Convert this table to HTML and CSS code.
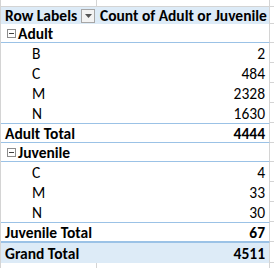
FILE: index.html
```html
<!DOCTYPE html>
<html>
<head>
<meta charset="utf-8">
<link rel="stylesheet" href="styles.css">
</head>
<body>
<div class="sheet">
  <div class="row strip">
    <div class="edge"></div><div class="cell a"></div><div class="cell b"></div><div class="cell c"></div>
  </div>
  <div class="row hdr">
    <div class="edge"></div>
    <div class="cell a bold">Row Labels <span class="dd"><svg width="7" height="4" viewBox="0 0 7 4"><path d="M0 0H7L3.5 4Z" fill="#555"/></svg></span></div>
    <div class="cell b bold">Count of Adult or Juvenile</div>
    <div class="cell c"></div>
  </div>
  <div class="row cat">
    <div class="edge"></div>
    <div class="cell a bold"><span class="box"></span>Adult</div>
    <div class="cell b num"></div>
    <div class="cell c"></div>
  </div>
  <div class="row item"><div class="edge"></div><div class="cell a"><span class="ind">B</span></div><div class="cell b num">2</div><div class="cell c"></div></div>
  <div class="row item"><div class="edge"></div><div class="cell a"><span class="ind">C</span></div><div class="cell b num">484</div><div class="cell c"></div></div>
  <div class="row item"><div class="edge"></div><div class="cell a"><span class="ind">M</span></div><div class="cell b num">2328</div><div class="cell c"></div></div>
  <div class="row item"><div class="edge"></div><div class="cell a"><span class="ind">N</span></div><div class="cell b num">1630</div><div class="cell c"></div></div>
  <div class="row sub"><div class="edge"></div><div class="cell a bold">Adult Total</div><div class="cell b num bold">4444</div><div class="cell c"></div></div>
  <div class="row cat">
    <div class="edge"></div>
    <div class="cell a bold"><span class="box"></span>Juvenile</div>
    <div class="cell b num"></div>
    <div class="cell c"></div>
  </div>
  <div class="row item"><div class="edge"></div><div class="cell a"><span class="ind">C</span></div><div class="cell b num">4</div><div class="cell c"></div></div>
  <div class="row item"><div class="edge"></div><div class="cell a"><span class="ind">M</span></div><div class="cell b num">33</div><div class="cell c"></div></div>
  <div class="row item"><div class="edge"></div><div class="cell a"><span class="ind">N</span></div><div class="cell b num">30</div><div class="cell c"></div></div>
  <div class="row sub"><div class="edge"></div><div class="cell a bold">Juvenile Total</div><div class="cell b num bold">67</div><div class="cell c"></div></div>
  <div class="row grand"><div class="edge"></div><div class="cell a bold">Grand Total</div><div class="cell b num bold">4511</div><div class="cell c"></div></div>
  <div class="row strip"><div class="edge"></div><div class="cell a"></div><div class="cell b"></div><div class="cell c"></div></div>
</div>
</body>
</html>
```
FILE: styles.css
```css
html, body { margin: 0; padding: 0; background: #fff; }
body { font-family: Carlito, Lato, "Liberation Sans", sans-serif; font-size: 15.5px; color: #000; }
.sheet { width: 274px; height: 268px; overflow: hidden; }
.row { display: flex; height: 20px; box-sizing: border-box; }
.edge { width: 1px; flex: none; border-right: 1px solid #d4d4d4; box-sizing: border-box; }
.cell { box-sizing: border-box; height: 100%; display: flex; align-items: center; white-space: nowrap; }
.a { width: 96px; flex: none; padding-left: 4px; }
.b { width: 173px; flex: none; padding-left: 3px; border-right: 1px solid #d4d4d4; }
.c { flex: 1; border-bottom: 1px solid #d4d4d4; }
.num { justify-content: flex-end; padding-right: 4px; }
.bold { font-weight: 700; }
.strip { height: 7px; }
.strip .a { border-right: 1px solid #d4d4d4; border-bottom: 1px solid #d4d4d4; }
.strip .b { border-bottom: 1px solid #d4d4d4; }
.hdr { height: 17px; }
.hdr .a, .hdr .b { background: #ddebf7; }
.dd { margin-left: auto; margin-right: 2px; width: 14px; height: 14px; box-sizing: border-box; border: 1px solid #a6a6a6; background: #f3f3f3; display: flex; align-items: center; justify-content: center; }
.cat { height: 19px; }
.cat .a, .cat .b { border-bottom: 1px solid #9bc2e6; }
.cat .a { padding-left: 6px; }
.box { width: 9px; height: 9px; box-sizing: border-box; border: 1px solid #8c8c8c; margin-right: 2px; position: relative; background: #fff; flex: none; }
.box::after { content: ""; position: absolute; left: 1px; top: 3px; width: 5px; height: 1px; background: #404040; }
.ind { padding-left: 27px; }
.sub .a, .sub .b { border-top: 1px solid #9bc2e6; border-bottom: 1px solid #9bc2e6; }
.grand .a, .grand .b { background: #ddebf7; border-top: 1px solid #9bc2e6; }
.grand { height: 21px; }
```
